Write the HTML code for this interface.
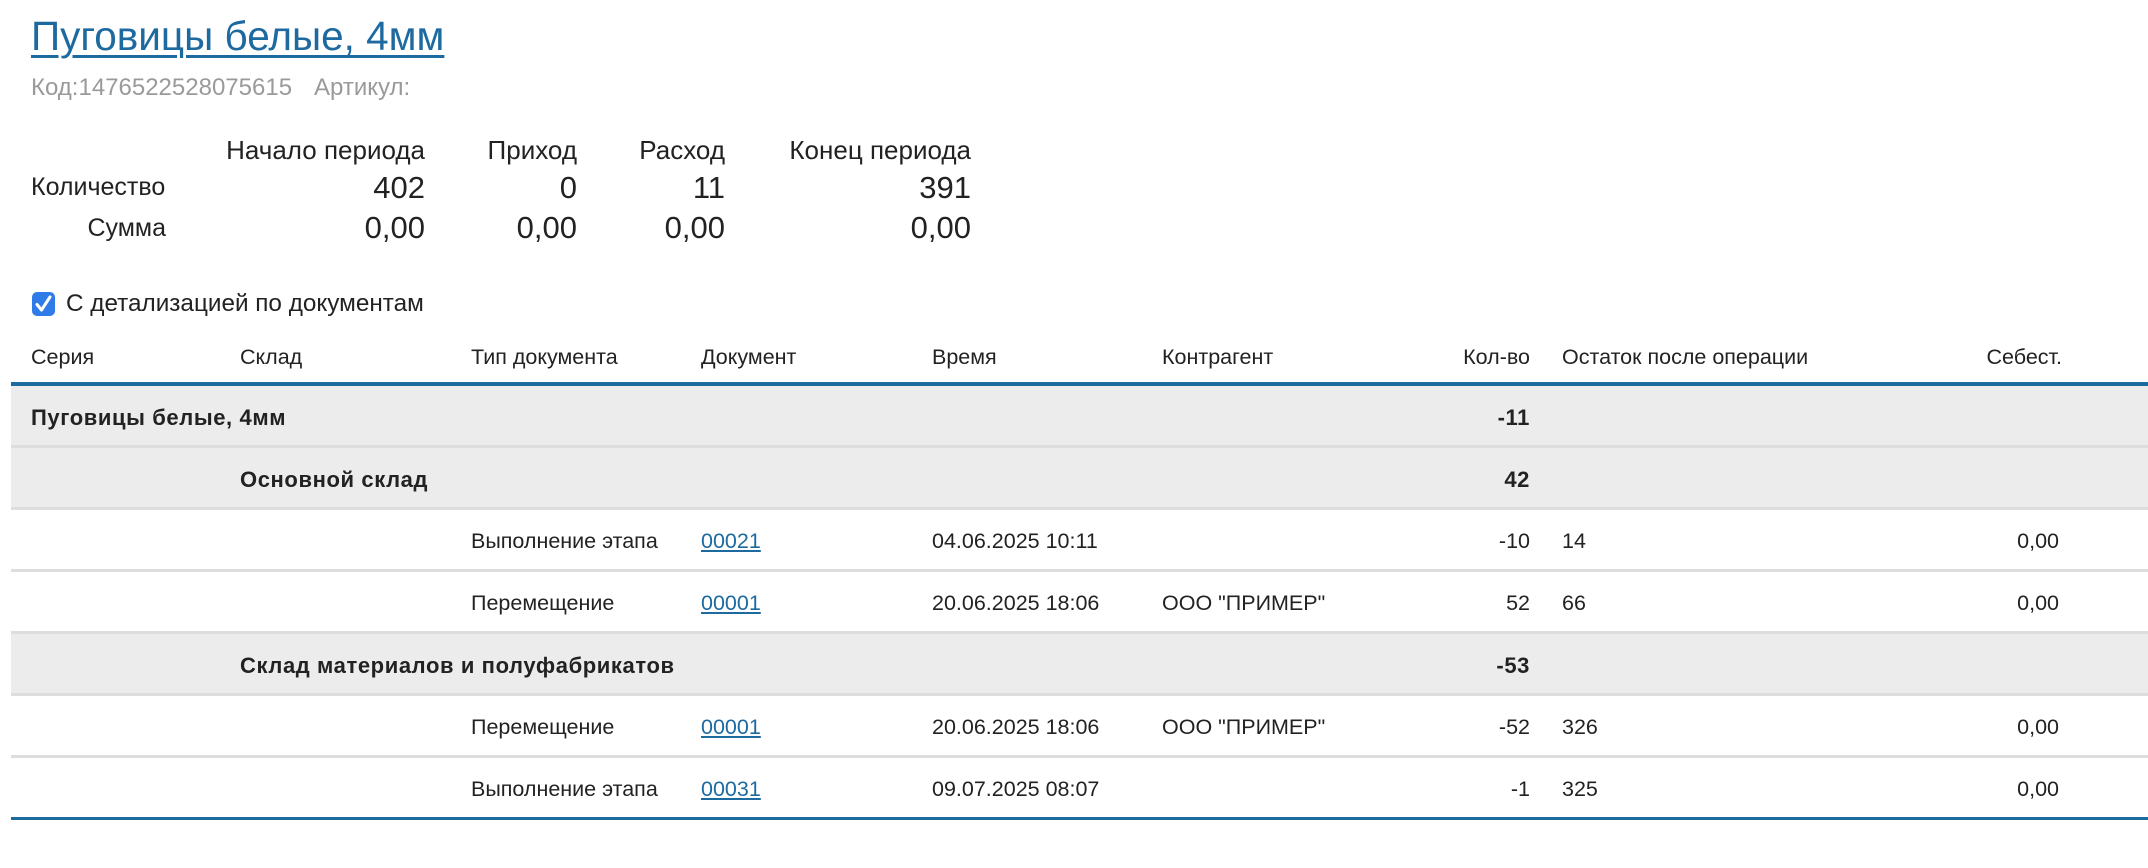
<!DOCTYPE html>
<html><head><meta charset="utf-8"><style>
body{margin:0;width:2148px;height:868px;background:#fff;font-family:"Liberation Sans",sans-serif;color:#222;position:relative;overflow:hidden}
.a{position:absolute;white-space:nowrap}
.r{text-align:right}
a{color:#1d6aa0}
.title{left:31px;top:13px;font-size:40.5px;color:#1d6aa0;text-decoration:underline;text-decoration-thickness:3px;text-underline-offset:5px}
.g{color:#9a9a9a;font-size:24px;top:74px}
.h{font-size:26px;top:135px}
.q{font-size:31px;top:170px}
.s{font-size:31px;top:210px}
.tbl{position:absolute;left:11px;right:0;top:382px}
.row{position:relative;height:59px;border-top:3px solid #ddd;font-size:21.5px}
.row.grp{background:#ececec;font-weight:bold;font-size:22px;letter-spacing:0.6px}
.row span{position:absolute;top:19px;white-space:nowrap}
.th span{position:absolute;white-space:nowrap;font-size:21.5px;top:345px}
</style></head><body>
<div class="a title">Пуговицы белые, 4мм</div>
<div class="a g" style="left:31px">Код:1476522528075615</div>
<div class="a g" style="left:314px">Артикул:</div>

<div class="a h r" style="right:1723px">Начало периода</div>
<div class="a h r" style="right:1571px">Приход</div>
<div class="a h r" style="right:1423px">Расход</div>
<div class="a h r" style="right:1177px">Конец периода</div>
<div class="a" style="left:31px;top:173px;font-size:25px">Количество</div>
<div class="a" style="right:1982px;top:214px;font-size:25px">Сумма</div>
<div class="a q" style="right:1723px">402</div>
<div class="a q" style="right:1571px">0</div>
<div class="a q" style="right:1423px">11</div>
<div class="a q" style="right:1177px">391</div>
<div class="a s" style="right:1723px">0,00</div>
<div class="a s" style="right:1571px">0,00</div>
<div class="a s" style="right:1423px">0,00</div>
<div class="a s" style="right:1177px">0,00</div>

<div class="a" style="left:32px;top:292px;width:23px;height:24px;background:#2f7be8;border-radius:5px"><svg width="23" height="24" viewBox="0 0 23 24"><path d="M5 12.5 L9.5 18 L18 5" stroke="#fff" stroke-width="3" fill="none" stroke-linecap="round" stroke-linejoin="round"/></svg></div>
<div class="a" style="left:66px;top:290px;font-size:24.3px">С детализацией по документам</div>

<div class="th">
<span style="left:31px">Серия</span>
<span style="left:240px">Склад</span>
<span style="left:471px">Тип документа</span>
<span style="left:701px">Документ</span>
<span style="left:932px">Время</span>
<span style="left:1162px">Контрагент</span>
<span style="right:618px">Кол-во</span>
<span style="left:1562px">Остаток после операции</span>
<span style="right:86px">Себест.</span>
</div>

<div class="tbl">
<div class="row grp" style="border-top:4px solid #1d6aa0"><span style="left:20px">Пуговицы белые, 4мм</span><span style="right:618px">-11</span></div>
<div class="row grp"><span style="left:229px">Основной склад</span><span style="right:618px">42</span></div>
<div class="row"><span style="left:460px">Выполнение этапа</span><span style="left:690px"><a href="#">00021</a></span><span style="left:921px">04.06.2025 10:11</span><span style="right:618px">-10</span><span style="left:1551px">14</span><span style="right:89px">0,00</span></div>
<div class="row"><span style="left:460px">Перемещение</span><span style="left:690px"><a href="#">00001</a></span><span style="left:921px">20.06.2025 18:06</span><span style="left:1151px">ООО "ПРИМЕР"</span><span style="right:618px">52</span><span style="left:1551px">66</span><span style="right:89px">0,00</span></div>
<div class="row grp"><span style="left:229px">Склад материалов и полуфабрикатов</span><span style="right:618px">-53</span></div>
<div class="row"><span style="left:460px">Перемещение</span><span style="left:690px"><a href="#">00001</a></span><span style="left:921px">20.06.2025 18:06</span><span style="left:1151px">ООО "ПРИМЕР"</span><span style="right:618px">-52</span><span style="left:1551px">326</span><span style="right:89px">0,00</span></div>
<div class="row" style="border-bottom:3px solid #1d6aa0"><span style="left:460px">Выполнение этапа</span><span style="left:690px"><a href="#">00031</a></span><span style="left:921px">09.07.2025 08:07</span><span style="right:618px">-1</span><span style="left:1551px">325</span><span style="right:89px">0,00</span></div>
</div>
</body></html>
